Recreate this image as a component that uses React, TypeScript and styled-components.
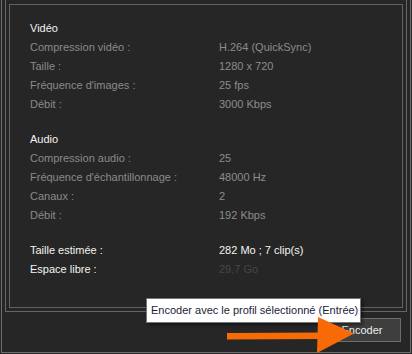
import React from "react";
import styled, { createGlobalStyle } from "styled-components";

const GlobalStyle = createGlobalStyle`
  html, body {
    margin: 0;
    padding: 0;
    background: #262626;
    overflow: hidden;
  }
  body {
    font-family: "Liberation Sans", Arial, sans-serif;
    font-size: 11px;
  }
`;

type Row = { label: string; value: string };

const video: Row[] = [
  { label: "Compression vidéo :", value: "H.264 (QuickSync)" },
  { label: "Taille :", value: "1280 x 720" },
  { label: "Fréquence d'images :", value: "25 fps" },
  { label: "Débit :", value: "3000 Kbps" },
];

const audio: Row[] = [
  { label: "Compression audio :", value: "25" },
  { label: "Fréquence d'échantillonnage :", value: "48000 Hz" },
  { label: "Canaux :", value: "2" },
  { label: "Débit :", value: "192 Kbps" },
];

export default function App() {
  return (
    <Page>
      <GlobalStyle />
      <Frame>
        <GroupBox>
          <SummaryBox>
            <Section>
              <SectionTitle>Vidéo</SectionTitle>
              {video.map((r) => (
                <InfoRow key={r.label}>
                  <Label>{r.label}</Label>
                  <Value>{r.value}</Value>
                </InfoRow>
              ))}
            </Section>
            <Section>
              <SectionTitle>Audio</SectionTitle>
              {audio.map((r) => (
                <InfoRow key={r.label}>
                  <Label>{r.label}</Label>
                  <Value>{r.value}</Value>
                </InfoRow>
              ))}
            </Section>
            <Section>
              <InfoRow>
                <Label $bright>Taille estimée :</Label>
                <Value $tone="bright">282 Mo ; 7 clip(s)</Value>
              </InfoRow>
              <InfoRow>
                <Label $bright>Espace libre :</Label>
                <Value $tone="dim">29,7 Go</Value>
              </InfoRow>
            </Section>
          </SummaryBox>
        </GroupBox>
        <ButtonBar>
          <EncodeButton>Encoder</EncodeButton>
        </ButtonBar>
      </Frame>

      <Tooltip>Encoder avec le profil sélectionné (Entrée)</Tooltip>

      {/* annotation arrow drawn over the dialog */}
      <Arrow width="412" height="354" viewBox="0 0 412 354">
        <polygon points="227,333 322,332.5 322,339 227,339.5" fill="#f86a06" />
        <polygon points="318,317 354,333.5 317,353" fill="#f86a06" />
      </Arrow>
    </Page>
  );
}

const Page = styled.div`
  position: relative;
  width: 412px;
  height: 354px;
  overflow: hidden;
  background: #262626;
`;

// outer dialog frame, its top is scrolled out of view
const Frame = styled.div`
  margin-left: 1px;
  width: 410px;
  height: 353px;
  border: 1px solid #6e6e6e;
  border-top: none;
  padding: 0 3px;
  box-sizing: border-box;
  display: flex;
  flex-direction: column;
`;

const GroupBox = styled.div`
  height: 312px;
  border: 1px solid #666;
  border-top: none;
  padding: 4px 3px 3px;
  box-sizing: border-box;
`;

const SummaryBox = styled.div`
  height: 304px;
  border: 1px solid #626262;
  box-sizing: border-box;
  padding: 14px 0 0 20px;
  display: flex;
  flex-direction: column;
  gap: 16px;
`;

const Section = styled.div`
  display: flex;
  flex-direction: column;
`;

const SectionTitle = styled.div`
  height: 19px;
  line-height: 19px;
  color: #f2f2f2;
`;

const InfoRow = styled.div`
  display: flex;
  height: 19px;
  line-height: 19px;
`;

const Label = styled.span<{ $bright?: boolean }>`
  width: 189px;
  flex-shrink: 0;
  color: ${(p) => (p.$bright ? "#f4f4f0" : "#8a8a8a")};
`;

const Value = styled.span<{ $tone?: "bright" | "dim" }>`
  color: ${(p) =>
    p.$tone === "bright" ? "#f4f4f0" : p.$tone === "dim" ? "#474747" : "#8c8c8c"};
`;

const ButtonBar = styled.div`
  flex: 1;
  display: flex;
  justify-content: flex-end;
  align-items: flex-start;
  padding: 6px 6px 0 0;
`;

const EncodeButton = styled.button`
  width: 78px;
  height: 24px;
  background: #3e3e3e;
  border: 1px solid #6c6c6c;
  color: #ececec;
  font-family: "Liberation Sans", Arial, sans-serif;
  font-size: 11px;
  padding: 0;
`;

const Tooltip = styled.div`
  position: absolute;
  left: 146px;
  top: 298px;
  width: 215px;
  height: 25px;
  box-sizing: border-box;
  background: #ffffff;
  border: 1px solid #767676;
  color: #1c1c38;
  font-size: 11px;
  line-height: 23px;
  padding-left: 4px;
  white-space: nowrap;
  box-shadow: 2px 2px 3px rgba(0, 0, 0, 0.45);
`;

const Arrow = styled.svg`
  position: absolute;
  left: 0;
  top: 0;
  pointer-events: none;
`;
